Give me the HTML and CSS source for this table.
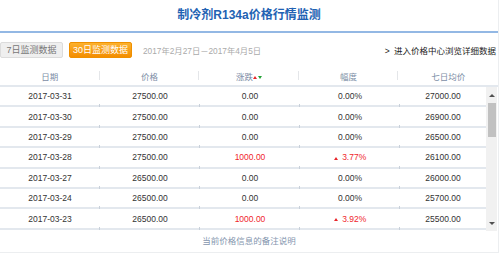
FILE: index.html
```html
<!DOCTYPE html>
<html>
<head>
    <title>制冷剂R134a价格行情监测</title>
    <link rel="stylesheet" href="styles.css">
</head>
<body>

<div class="panel">
    <h1 class="title">制冷剂R134a价格行情监测</h1>

    <div class="toolbar">
        <span class="btn">7日监测数据</span>
        <span class="btn btn-on">30日监测数据</span>
        <span class="range">2017年2月27日－2017年4月5日</span>
        <a class="more" href="#"><b>&gt;</b> 进入价格中心浏览详细数据</a>
    </div>

    <table class="head">
        <tr>
            <th>日期</th>
            <th>价格</th>
            <th>涨跌<i class="tri tri-up"></i><i class="tri tri-down"></i></th>
            <th>幅度</th>
            <th>七日均价</th>
        </tr>
    </table>

    <div class="grid">
        <div class="rows">
            <table class="data">
                <tr><td>2017-03-31</td><td>27500.00</td><td>0.00</td><td>0.00%</td><td>27000.00</td></tr>
                <tr><td>2017-03-30</td><td>27500.00</td><td>0.00</td><td>0.00%</td><td>26900.00</td></tr>
                <tr><td>2017-03-29</td><td>27500.00</td><td>0.00</td><td>0.00%</td><td>26500.00</td></tr>
                <tr class="rise"><td>2017-03-28</td><td>27500.00</td><td>1000.00</td><td><i class="tri tri-up"></i> 3.77%</td><td>26100.00</td></tr>
                <tr><td>2017-03-27</td><td>26500.00</td><td>0.00</td><td>0.00%</td><td>26000.00</td></tr>
                <tr><td>2017-03-24</td><td>26500.00</td><td>0.00</td><td>0.00%</td><td>25700.00</td></tr>
                <tr class="rise"><td>2017-03-23</td><td>26500.00</td><td>1000.00</td><td><i class="tri tri-up"></i> 3.92%</td><td>25500.00</td></tr>
            </table>
        </div>
        <div class="scrollbar">
            <span class="arrow"><i class="arrow-up"></i></span>
            <span class="thumb"></span>
            <span class="arrow"><i class="arrow-down"></i></span>
        </div>
    </div>

    <div class="note">当前价格信息的备注说明</div>
</div>

</body>
</html>
```

FILE: styles.css
```css
body {
    margin: 0;
    padding: 0;
    background: #fff;
    font-family: 'Liberation Sans', 'Noto Sans CJK SC', sans-serif;
    color: #333;
}

.panel {
    width: 498px;
    border-right: 1px solid #eceef0;
}

.title {
    margin: 0;
    height: 31px;
    line-height: 30px;
    text-align: center;
    font-size: 12px;
    font-weight: bold;
    color: #2262b3;
    border-bottom: 2px solid #93b8e4;
}

.toolbar {
    display: flex;
    align-items: center;
    height: 16px;
    margin-top: 9px;
    font-size: 9px;
}

.btn {
    display: inline-block;
    width: 61px;
    height: 14px;
    line-height: 14px;
    text-align: center;
    border: 1px solid #dcdcdc;
    border-radius: 2px;
    background: #efefef;
    color: #777;
}

.btn-on {
    margin-left: 6px;
    border-color: #ef9000;
    background: linear-gradient(#fcb12e, #f38d00);
    color: #fff;
}

.range {
    margin-left: 11px;
    font-size: 8.3px;
    color: #aaa;
}

.more {
    margin-left: auto;
    margin-right: 2px;
    font-size: 8.5px;
    color: #222;
    text-decoration: none;
}

.more b {
    font-weight: normal;
    margin-right: 2px;
}

table {
    border-collapse: collapse;
    table-layout: fixed;
}

.head {
    width: 498px;
    margin-top: 8px;
}

.head th {
    position: relative;
    height: 19px;
    padding: 0;
    font-size: 8.5px;
    font-weight: normal;
    color: #7d8ea6;
    border-bottom: 2px solid #e3e8ee;
}

.head th:not(:last-child)::after {
    content: '';
    position: absolute;
    right: 0;
    top: 5px;
    width: 1px;
    height: 9px;
    background: #e4e6e9;
}

.tri {
    display: inline-block;
    width: 0;
    height: 0;
    border-left: 2.5px solid transparent;
    border-right: 2.5px solid transparent;
    vertical-align: middle;
}

.tri-up {
    border-bottom: 3px solid #e8262b;
}

.tri-down {
    margin-left: 1px;
    border-top: 3px solid #24a236;
}

.grid {
    display: flex;
    height: 144px;
}

.rows {
    width: 486px;
    overflow: hidden;
}

.data {
    width: 486px;
}

.data td {
    position: relative;
    width: 100px;
    height: 18.4px;
    padding: 0;
    text-align: center;
    font-size: 8.5px;
    border-bottom: 2px solid #e3e8ee;
}

.data td:last-child {
    width: auto;
}

.data td:not(:last-child)::after {
    content: '';
    position: absolute;
    right: 0;
    bottom: -2px;
    width: 1px;
    height: 3px;
    background: #c8d0da;
}

.rise td:nth-child(3),
.rise td:nth-child(4) {
    color: #f0262c;
}

.rise .tri-up {
    margin-right: 2px;
}

.scrollbar {
    display: flex;
    flex-direction: column;
    width: 11px;
    background: #f1f1f1;
}

.arrow {
    display: flex;
    align-items: center;
    justify-content: center;
    height: 16px;
}

.arrow-up,
.arrow-down {
    width: 0;
    height: 0;
    border-left: 3px solid transparent;
    border-right: 3px solid transparent;
}

.arrow-up {
    border-bottom: 3px solid #505050;
}

.arrow-down {
    border-top: 3px solid #505050;
}

.thumb {
    height: 34px;
    margin: 0 1px auto 2px;
    background: #c1c1c1;
}

.note {
    height: 21px;
    line-height: 21px;
    text-align: center;
    font-size: 8.5px;
    color: #8495ae;
    border-bottom: 1px solid #eceef0;
}
```
